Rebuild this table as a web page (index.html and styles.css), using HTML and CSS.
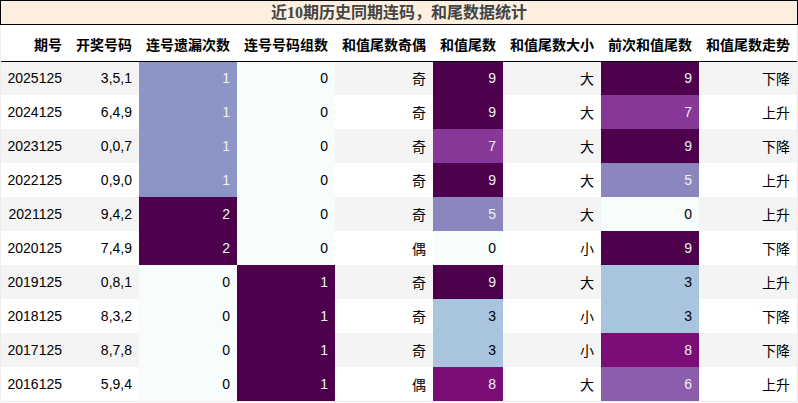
FILE: index.html
```html
<!DOCTYPE html>
<html lang="zh">
<head>
<meta charset="utf-8">
<title>近10期历史同期连码，和尾数据统计</title>
<link rel="stylesheet" href="styles.css">
</head>
<body>
<div class="wrap">
  <div class="title">近10期历史同期连码，和尾数据统计</div>
  <table class="stats">
    <colgroup>
      <col class="w68"><col class="w70"><col class="w98"><col class="w98"><col class="w98"><col class="w70"><col class="w98"><col class="w98"><col class="w98">
    </colgroup>
    <thead>
      <tr><th>期号</th><th>开奖号码</th><th>连号遗漏次数</th><th>连号号码组数</th><th>和值尾数奇偶</th><th>和值尾数</th><th>和值尾数大小</th><th>前次和值尾数</th><th>和值尾数走势</th></tr>
    </thead>
    <tbody>
      <tr><td>2025125</td><td>3,5,1</td><td class="b1">1</td><td class="b0">0</td><td>奇</td><td class="c9">9</td><td>大</td><td class="c9">9</td><td>下降</td></tr>
      <tr><td>2024125</td><td>6,4,9</td><td class="b1">1</td><td class="b0">0</td><td>奇</td><td class="c9">9</td><td>大</td><td class="c7">7</td><td>上升</td></tr>
      <tr><td>2023125</td><td>0,0,7</td><td class="b1">1</td><td class="b0">0</td><td>奇</td><td class="c7">7</td><td>大</td><td class="c9">9</td><td>下降</td></tr>
      <tr><td>2022125</td><td>0,9,0</td><td class="b1">1</td><td class="b0">0</td><td>奇</td><td class="c9">9</td><td>大</td><td class="c5">5</td><td>上升</td></tr>
      <tr><td>2021125</td><td>9,4,2</td><td class="b2">2</td><td class="b0">0</td><td>奇</td><td class="c5">5</td><td>大</td><td class="c0">0</td><td>上升</td></tr>
      <tr><td>2020125</td><td>7,4,9</td><td class="b2">2</td><td class="b0">0</td><td>偶</td><td class="c0">0</td><td>小</td><td class="c9">9</td><td>下降</td></tr>
      <tr><td>2019125</td><td>0,8,1</td><td class="b0">0</td><td class="b2">1</td><td>奇</td><td class="c9">9</td><td>大</td><td class="c3">3</td><td>上升</td></tr>
      <tr><td>2018125</td><td>8,3,2</td><td class="b0">0</td><td class="b2">1</td><td>奇</td><td class="c3">3</td><td>小</td><td class="c3">3</td><td>下降</td></tr>
      <tr><td>2017125</td><td>8,7,8</td><td class="b0">0</td><td class="b2">1</td><td>奇</td><td class="c3">3</td><td>小</td><td class="c8">8</td><td>下降</td></tr>
      <tr><td>2016125</td><td>5,9,4</td><td class="b0">0</td><td class="b2">1</td><td>偶</td><td class="c8">8</td><td>大</td><td class="c6">6</td><td>上升</td></tr>
    </tbody>
  </table>
</div>
</body>
</html>
```
FILE: styles.css
```css
html, body {
  margin: 0;
  padding: 0;
  background: #ffffff;
}
.wrap {
  width: 796px;
  border-left: 1px solid #ececec;
  border-right: 1px solid #ececec;
  border-bottom: 1px solid #ececec;
  font-family: "Liberation Sans", "Noto Sans CJK SC", sans-serif;
  font-size: 14px;
  color: #000;
}
.title {
  margin: 0 -1px 0 -1px;
  height: 23px;
  border: 1px solid #000;
  background: #fdefe0;
  color: #444;
  font-family: "Liberation Serif", "Noto Sans CJK SC", serif;
  font-weight: bold;
  font-size: 16px;
  line-height: 23px;
  text-align: center;
}
.stats {
  width: 796px;
  table-layout: fixed;
  border-collapse: collapse;
  border-spacing: 0;
}
.w68 { width: 68px; }
.w70 { width: 70px; }
.w98 { width: 98px; }
.stats th {
  height: 35px;
  padding: 2px 7px 0 0;
  box-sizing: border-box;
  text-align: right;
  font-weight: bold;
  font-size: 14px;
  border-bottom: 1px solid #000;
  white-space: nowrap;
  background: #fff;
}
.stats thead tr { height: 36px; }
.stats td {
  height: 34px;
  padding: 0 7px 0 0;
  box-sizing: border-box;
  text-align: right;
  white-space: nowrap;
}
.stats tbody tr:nth-child(odd) { background: #f4f4f4; }
.stats tbody tr:nth-child(even) { background: #ffffff; }

.b0, .c0 { background: #f7fcfd; color: #000; }
.b1 { background: #8c96c6; color: #f1f1f1; }
.b2, .c9 { background: #4d004b; color: #f1f1f1; }
.c3 { background: #a9c4de; color: #000; }
.c5 { background: #8c86be; color: #f1f1f1; }
.c6 { background: #8b5daa; color: #f1f1f1; }
.c7 { background: #873797; color: #f1f1f1; }
.c8 { background: #7b0d77; color: #f1f1f1; }
```
